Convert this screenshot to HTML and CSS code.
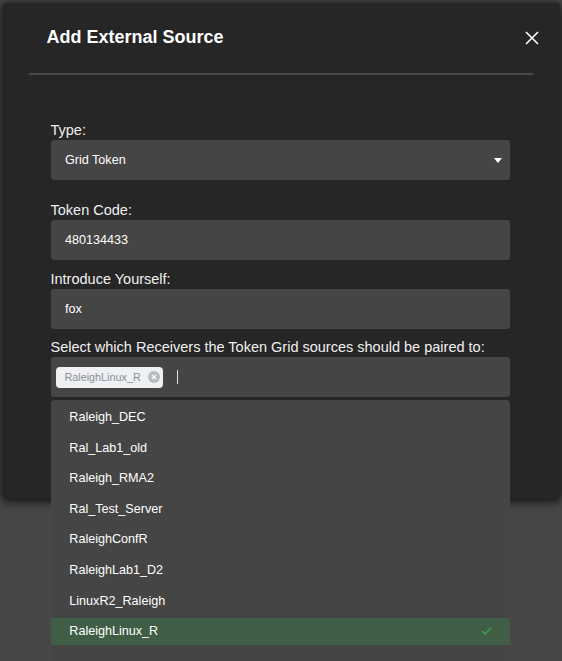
FILE: index.html
```html
<!DOCTYPE html>
<html lang="en">
<head>
<meta charset="utf-8">
<title>Add External Source</title>
<link rel="stylesheet" href="styles.css">
</head>
<body>
<div class="modal">
  <div class="modal-header">
    <h2 class="modal-title">Add External Source</h2>
    <button class="close-btn" type="button" aria-label="Close">
      <svg width="14" height="14" viewBox="0 0 14 14"><path d="M1 1 L13 13 M13 1 L1 13" stroke="#ffffff" stroke-width="1.6" fill="none"/></svg>
    </button>
  </div>
  <div class="divider"></div>
  <form class="form">
    <div class="field field-first">
      <label class="label">Type:</label>
      <div class="box select">
        <span class="value">Grid Token</span>
        <span class="tri"></span>
      </div>
    </div>
    <div class="field">
      <label class="label">Token Code:</label>
      <div class="box"><span class="value">480134433</span></div>
    </div>
    <div class="field">
      <label class="label">Introduce Yourself:</label>
      <div class="box"><span class="value">fox</span></div>
    </div>
    <div class="field">
      <label class="label">Select which Receivers the Token Grid sources should be paired to:</label>
      <div class="box multi">
        <span class="tag">RaleighLinux_R<span class="tag-clear"><svg width="12" height="12" viewBox="0 0 12 12"><circle cx="6" cy="6" r="6" fill="#b7bac2"/><path d="M4 4 L8 8 M8 4 L4 8" stroke="#ffffff" stroke-width="1.2"/></svg></span></span>
        <span class="text-caret"></span>
        <ul class="menu">
          <li class="item">Raleigh_DEC</li>
          <li class="item">Ral_Lab1_old</li>
          <li class="item">Raleigh_RMA2</li>
          <li class="item">Ral_Test_Server</li>
          <li class="item">RaleighConfR</li>
          <li class="item">RaleighLab1_D2</li>
          <li class="item">LinuxR2_Raleigh</li>
          <li class="item selected">RaleighLinux_R<svg class="check" width="11" height="8" viewBox="0 0 11 8"><path d="M1 4 L4 7 L10 1" stroke="#3aa452" stroke-width="1.5" fill="none"/></svg></li>
        </ul>
      </div>
    </div>
  </form>
</div>
</body>
</html>
```

FILE: styles.css
```css
html, body {
  margin: 0;
  padding: 0;
  overflow: hidden;
}
body {
  background: #474747;
  font-family: "Liberation Sans", Arial, sans-serif;
  color: #f2f2f2;
  padding-top: 3px;
  height: 658px;
}
.modal {
  width: 557px;
  margin: 0 auto;
  background: #262626;
  border-radius: 4px;
  box-shadow: 0 2px 10px 2px rgba(0, 0, 0, 0.7);
  box-sizing: border-box;
}
.modal-header {
  display: flex;
  justify-content: space-between;
  align-items: flex-start;
  padding: 23px 21px 0 44px;
}
.modal-title {
  margin: 0;
  font-size: 18px;
  line-height: 22px;
  font-weight: bold;
  color: #ffffff;
}
.close-btn {
  background: none;
  border: 0;
  padding: 0;
  margin-top: 5px;
  width: 14px;
  height: 14px;
  display: block;
  cursor: pointer;
}
.close-btn svg {
  display: block;
}
.divider {
  height: 2px;
  background: #494949;
  margin: 25px 27px 0 26px;
}
.form {
  display: flex;
  flex-direction: column;
  gap: 9.5px;
  padding: 46px 50px 101px 48px;
  margin: 0;
}
.field-first {
  margin-bottom: 11.5px;
}
.label {
  display: block;
  font-size: 14.5px;
  line-height: 18px;
  margin-bottom: 1px;
  color: #f0f0f0;
}
.box {
  height: 40px;
  background: #454545;
  border-radius: 3px;
  display: flex;
  align-items: center;
  padding-left: 14.5px;
  box-sizing: border-box;
}
.value {
  font-size: 12.6px;
  color: #ffffff;
}
.select {
  justify-content: space-between;
  padding-right: 8px;
}
.tri {
  width: 0;
  height: 0;
  border-left: 4px solid transparent;
  border-right: 4px solid transparent;
  border-top: 5.5px solid #ffffff;
  margin-top: 1px;
}
.multi {
  position: relative;
  padding-left: 5px;
}
.tag {
  display: inline-flex;
  align-items: center;
  height: 21px;
  padding: 0 3px 0 9px;
  background: #eff0f4;
  border-radius: 4px;
  font-size: 10.8px;
  color: #8a8d97;
}
.tag-clear {
  display: block;
  width: 12px;
  height: 12px;
  margin-left: 7px;
}
.tag-clear svg {
  display: block;
}
.text-caret {
  width: 1px;
  height: 14px;
  background: #e0e0e0;
  margin-left: 14px;
}
.menu {
  position: absolute;
  left: 0;
  right: 0;
  top: calc(100% + 2.5px);
  margin: 0;
  padding: 4px 0 30px;
  list-style: none;
  background: #454545;
  border-radius: 4px 4px 0 0;
}
.item {
  height: 27px;
  margin-bottom: 3.6px;
  padding-left: 18.8px;
  padding-right: 18px;
  display: flex;
  align-items: center;
  justify-content: space-between;
  font-size: 12.6px;
  color: #ffffff;
}
.item.selected {
  background: #3f5e45;
}
.check {
  display: block;
}
```
